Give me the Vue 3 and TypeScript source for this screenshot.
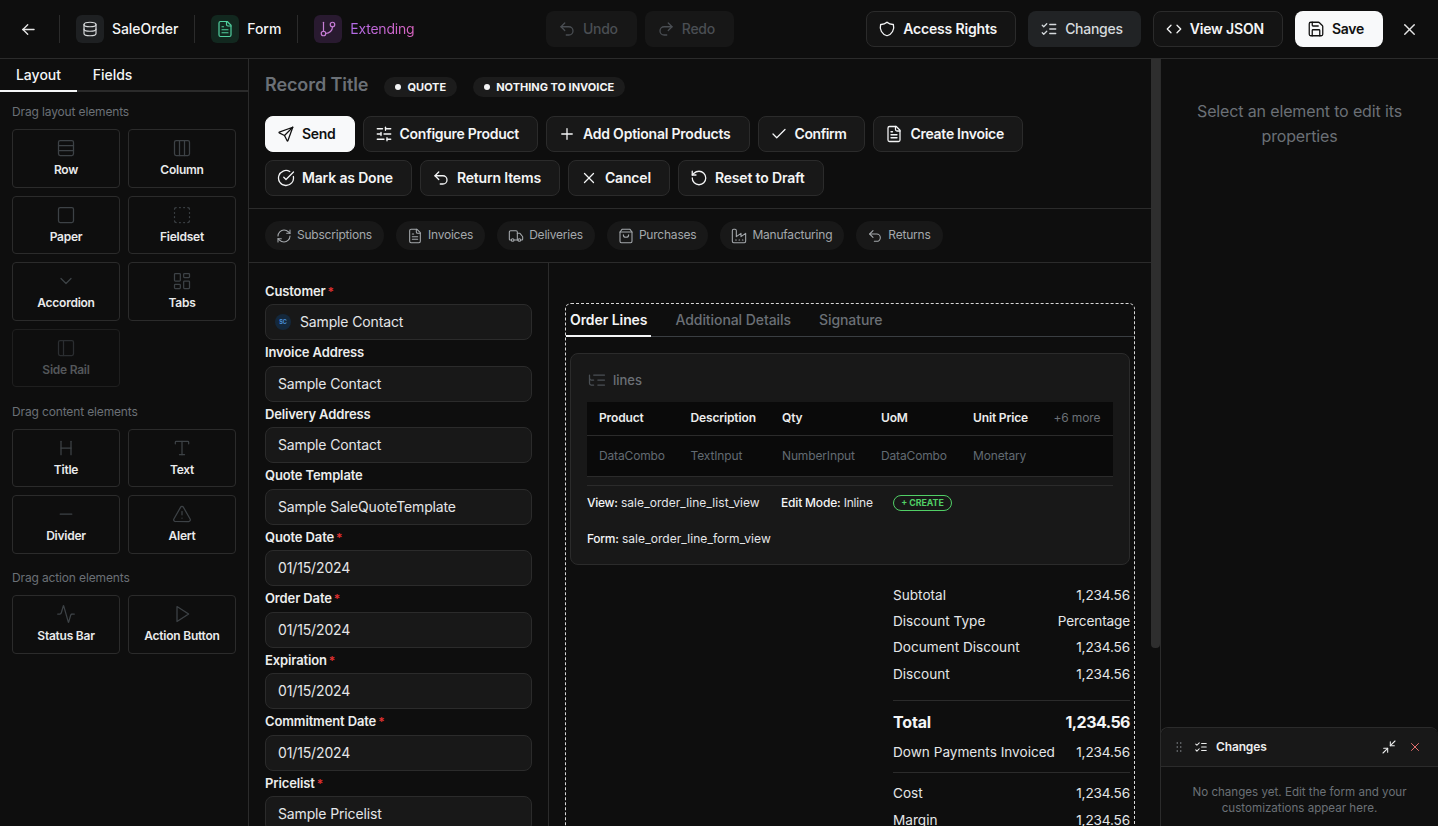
<script setup lang="ts">
import { h } from 'vue'

const icons: Record<string, string[]> = {
  back: ['M5 12h14', 'M5 12l6 6', 'M5 12l6-6'],
  db: ['M4 6a8 3 0 1 0 16 0a8 3 0 1 0-16 0', 'M4 6v6a8 3 0 0 0 16 0v-6', 'M4 12v6a8 3 0 0 0 16 0v-6'],
  file: ['M15 2H6a2 2 0 0 0-2 2v16a2 2 0 0 0 2 2h12a2 2 0 0 0 2-2V7Z', 'M14 2v4a2 2 0 0 0 2 2h4', 'M10 9H8', 'M16 13H8', 'M16 17H8'],
  branch: ['M6 3v12', 'M15 6a3 3 0 1 0 6 0a3 3 0 1 0-6 0', 'M3 18a3 3 0 1 0 6 0a3 3 0 1 0-6 0', 'M18 9a9 9 0 0 1-9 9'],
  undo: ['M9 14 4 9l5-5', 'M4 9h10.5a5.5 5.5 0 0 1 5.5 5.5a5.5 5.5 0 0 1-5.5 5.5H11'],
  redo: ['m15 14 5-5-5-5', 'M20 9H9.5A5.5 5.5 0 0 0 4 14.5A5.5 5.5 0 0 0 9.5 20H13'],
  shield: ['M12 3a12 12 0 0 0 8.5 3a12 12 0 0 1-8.5 15a12 12 0 0 1-8.5-15a12 12 0 0 0 8.5-3'],
  changes: ['m3 17 2 2 4-4', 'm3 7 2 2 4-4', 'M13 6h8', 'M13 12h8', 'M13 18h8'],
  code: ['M8 7l-5 5l5 5', 'M16 7l5 5l-5 5'],
  save: ['M15.2 3a2 2 0 0 1 1.4.6l3.8 3.8a2 2 0 0 1 .6 1.4V19a2 2 0 0 1-2 2H5a2 2 0 0 1-2-2V5a2 2 0 0 1 2-2z', 'M17 21v-7a1 1 0 0 0-1-1H8a1 1 0 0 0-1 1v7', 'M7 3v4a1 1 0 0 0 1 1h7'],
  x: ['M18 6 6 18', 'M6 6l12 12'],
  send: ['M10 14 21 3', 'M21 3l-6.5 18a.55.55 0 0 1-1 0l-3.5-7-7-3.5a.55.55 0 0 1 0-1l18-6.5'],
  sliders: ['M10 5H3', 'M12 19H3', 'M14 3v4', 'M16 17v4', 'M21 12h-9', 'M21 19h-5', 'M21 5h-7', 'M8 10v4', 'M8 12H3'],
  plus: ['M12 5v14', 'M5 12h14'],
  check: ['M20 6 9 17l-5-5'],
  done: ['M21.801 10A10 10 0 1 1 17 3.335', 'm9 11 3 3L22 4'],
  reset: ['M3 12a9 9 0 1 0 9-9 9.75 9.75 0 0 0-6.74 2.74L3 8', 'M3 3v5h5'],
  refresh: ['M3 12a9 9 0 0 1 9-9 9.75 9.75 0 0 1 6.74 2.74L21 8', 'M21 3v5h-5', 'M21 12a9 9 0 0 1-9 9 9.75 9.75 0 0 1-6.74-2.74L3 16', 'M8 16H3v5'],
  truck: ['M14 18V6a2 2 0 0 0-2-2H4a2 2 0 0 0-2 2v11a1 1 0 0 0 1 1h2', 'M15 18H9', 'M19 18h2a1 1 0 0 0 1-1v-3.65a1 1 0 0 0-.22-.624l-3.48-4.35A1 1 0 0 0 17.52 8H14', 'M15 18a2 2 0 1 0 4 0a2 2 0 1 0-4 0', 'M5 18a2 2 0 1 0 4 0a2 2 0 1 0-4 0'],
  bag: ['M6 2 3 6v14a2 2 0 0 0 2 2h14a2 2 0 0 0 2-2V6l-3-4Z', 'M3 6h18', 'M16 10a4 4 0 0 1-8 0'],
  factory: ['M2 20a2 2 0 0 0 2 2h16a2 2 0 0 0 2-2V8l-7 5V8l-7 5V4a2 2 0 0 0-2-2H4a2 2 0 0 0-2 2Z', 'M17 18h1', 'M12 18h1', 'M7 18h1'],
  row: ['M5 3h14a2 2 0 0 1 2 2v14a2 2 0 0 1-2 2H5a2 2 0 0 1-2-2V5a2 2 0 0 1 2-2z', 'M3 9h18', 'M3 15h18'],
  column: ['M5 3h14a2 2 0 0 1 2 2v14a2 2 0 0 1-2 2H5a2 2 0 0 1-2-2V5a2 2 0 0 1 2-2z', 'M9 3v18', 'M15 3v18'],
  paper: ['M5 3h14a2 2 0 0 1 2 2v14a2 2 0 0 1-2 2H5a2 2 0 0 1-2-2V5a2 2 0 0 1 2-2z'],
  fieldset: ['M5 3a2 2 0 0 0-2 2', 'M19 3a2 2 0 0 1 2 2', 'M21 19a2 2 0 0 1-2 2', 'M5 21a2 2 0 0 1-2-2', 'M9 3h1', 'M9 21h1', 'M14 3h1', 'M14 21h1', 'M3 9v1', 'M21 9v1', 'M3 14v1', 'M21 14v1'],
  chevron: ['m6 9 6 6 6-6'],
  tabs: ['M4 3h5a1 1 0 0 1 1 1v7a1 1 0 0 1-1 1H4a1 1 0 0 1-1-1V4a1 1 0 0 1 1-1z', 'M15 3h5a1 1 0 0 1 1 1v3a1 1 0 0 1-1 1h-5a1 1 0 0 1-1-1V4a1 1 0 0 1 1-1z', 'M15 12h5a1 1 0 0 1 1 1v7a1 1 0 0 1-1 1h-5a1 1 0 0 1-1-1v-7a1 1 0 0 1 1-1z', 'M4 16h5a1 1 0 0 1 1 1v3a1 1 0 0 1-1 1H4a1 1 0 0 1-1-1v-3a1 1 0 0 1 1-1z'],
  rail: ['M5 3h14a2 2 0 0 1 2 2v14a2 2 0 0 1-2 2H5a2 2 0 0 1-2-2V5a2 2 0 0 1 2-2z', 'M9 3v18'],
  heading: ['M6 12h12', 'M6 20V4', 'M18 20V4'],
  text: ['M12 4v16', 'M4 7V5a1 1 0 0 1 1-1h14a1 1 0 0 1 1 1v2', 'M9 20h6'],
  minus: ['M5 12h14'],
  alert: ['m21.73 18-8-14a2 2 0 0 0-3.48 0l-8 14A2 2 0 0 0 4 21h16a2 2 0 0 0 1.73-3', 'M12 9v4', 'M12 17h.01'],
  activity: ['M22 12h-2.48a2 2 0 0 0-1.93 1.46l-2.35 8.36a.25.25 0 0 1-.48 0L9.24 2.18a.25.25 0 0 0-.48 0l-2.35 8.36A2 2 0 0 1 4.49 12H2'],
  play: ['M6 3l14 9-14 9z'],
  tree: ['M21 12h-8', 'M21 6H8', 'M21 18h-8', 'M3 6v4c0 1.1.9 2 2 2h3', 'M3 10v6c0 1.1.9 2 2 2h3'],
  grip: ['M9 5h.01', 'M9 12h.01', 'M9 19h.01', 'M15 5h.01', 'M15 12h.01', 'M15 19h.01'],
  shrink: ['m14 10 7-7', 'M20 10h-6V4', 'm3 21 7-7', 'M4 14h6v6'],
}

const Icon = (props: { name: string; size?: number; sw?: number }) =>
  h(
    'svg',
    {
      width: props.size ?? 18,
      height: props.size ?? 18,
      viewBox: '0 0 24 24',
      fill: 'none',
      stroke: 'currentColor',
      'stroke-width': props.sw ?? 1.7,
      'stroke-linecap': 'round',
      'stroke-linejoin': 'round',
    },
    icons[props.name].map((d) => h('path', { d })),
  )
Icon.props = ['name', 'size', 'sw']

interface Tile {
  label: string
  icon: string
  off?: boolean
}

const paletteSections: { title: string; items: Tile[] }[] = [
  {
    title: 'Drag layout elements',
    items: [
      { label: 'Row', icon: 'row' },
      { label: 'Column', icon: 'column' },
      { label: 'Paper', icon: 'paper' },
      { label: 'Fieldset', icon: 'fieldset' },
      { label: 'Accordion', icon: 'chevron' },
      { label: 'Tabs', icon: 'tabs' },
      { label: 'Side Rail', icon: 'rail', off: true },
    ],
  },
  {
    title: 'Drag content elements',
    items: [
      { label: 'Title', icon: 'heading' },
      { label: 'Text', icon: 'text' },
      { label: 'Divider', icon: 'minus' },
      { label: 'Alert', icon: 'alert' },
    ],
  },
  {
    title: 'Drag action elements',
    items: [
      { label: 'Status Bar', icon: 'activity' },
      { label: 'Action Button', icon: 'play' },
    ],
  },
]

const actions = [
  { label: 'Send', icon: 'send', primary: true },
  { label: 'Configure Product', icon: 'sliders' },
  { label: 'Add Optional Products', icon: 'plus' },
  { label: 'Confirm', icon: 'check' },
  { label: 'Create Invoice', icon: 'file' },
  { label: 'Mark as Done', icon: 'done' },
  { label: 'Return Items', icon: 'undo' },
  { label: 'Cancel', icon: 'x' },
  { label: 'Reset to Draft', icon: 'reset' },
]

const links = [
  { label: 'Subscriptions', icon: 'refresh' },
  { label: 'Invoices', icon: 'file' },
  { label: 'Deliveries', icon: 'truck' },
  { label: 'Purchases', icon: 'bag' },
  { label: 'Manufacturing', icon: 'factory' },
  { label: 'Returns', icon: 'undo' },
]

const fields = [
  { label: 'Customer', value: 'Sample Contact', required: true, avatar: true },
  { label: 'Invoice Address', value: 'Sample Contact' },
  { label: 'Delivery Address', value: 'Sample Contact' },
  { label: 'Quote Template', value: 'Sample SaleQuoteTemplate' },
  { label: 'Quote Date', value: '01/15/2024', required: true },
  { label: 'Order Date', value: '01/15/2024', required: true },
  { label: 'Expiration', value: '01/15/2024', required: true },
  { label: 'Commitment Date', value: '01/15/2024', required: true },
  { label: 'Pricelist', value: 'Sample Pricelist', required: true },
]

const columns = [
  { name: 'Product', type: 'DataCombo' },
  { name: 'Description', type: 'TextInput' },
  { name: 'Qty', type: 'NumberInput' },
  { name: 'UoM', type: 'DataCombo' },
  { name: 'Unit Price', type: 'Monetary' },
]
</script>

<template>
  <div class="app">
    <header class="topbar">
      <div class="crumbs">
        <button class="back"><Icon name="back" :size="19" /></button>
        <span class="vsep"></span>
        <span class="tile"><Icon name="db" :sw="1.6" /></span>
        <span class="crumb">SaleOrder</span>
        <span class="vsep"></span>
        <span class="tile green"><Icon name="file" :sw="1.6" /></span>
        <span class="crumb">Form</span>
        <span class="vsep"></span>
        <span class="tile purple"><Icon name="branch" :sw="1.6" /></span>
        <span class="crumb ext">Extending</span>
      </div>
      <div class="history">
        <button class="tbtn off"><Icon name="undo" />Undo</button>
        <button class="tbtn off"><Icon name="redo" />Redo</button>
      </div>
      <div class="tools">
        <button class="tbtn line"><Icon name="shield" />Access Rights</button>
        <button class="tbtn active"><Icon name="changes" />Changes</button>
        <button class="tbtn line"><Icon name="code" />View JSON</button>
        <button class="tbtn white"><Icon name="save" />Save</button>
        <button class="close"><Icon name="x" :size="19" /></button>
      </div>
    </header>

    <div class="body">
      <aside class="palette">
        <div class="ptabs">
          <span class="ptab on">Layout</span>
          <span class="ptab">Fields</span>
        </div>
        <div class="psections">
          <section v-for="s in paletteSections" :key="s.title">
            <p class="ptitle">{{ s.title }}</p>
            <div class="pgrid">
              <div v-for="t in s.items" :key="t.label" class="ptile" :class="{ off: t.off }">
                <Icon :name="t.icon" :size="20" :sw="1.5" />
                <span>{{ t.label }}</span>
              </div>
            </div>
          </section>
        </div>
      </aside>

      <main class="canvas">
        <div class="head">
          <div class="titlerow">
            <h1>Record Title</h1>
            <span class="badge"><i></i>QUOTE</span>
            <span class="badge"><i></i>NOTHING TO INVOICE</span>
          </div>
          <div class="actions">
            <button v-for="a in actions" :key="a.label" class="act" :class="{ primary: a.primary }">
              <Icon :name="a.icon" />{{ a.label }}
            </button>
          </div>
        </div>
        <div class="links">
          <span v-for="l in links" :key="l.label" class="pill">
            <Icon :name="l.icon" :size="16" :sw="1.6" />{{ l.label }}
          </span>
        </div>
        <div class="split">
          <div class="formcol">
            <div v-for="f in fields" :key="f.label" class="field">
              <label>{{ f.label }}<em v-if="f.required">*</em></label>
              <div class="input" :class="{ withavatar: f.avatar }">
                <span v-if="f.avatar" class="avatar">SC</span>{{ f.value }}
              </div>
            </div>
          </div>
          <div class="maincol">
            <div class="dashed">
              <div class="tabs">
                <span class="tab on">Order Lines</span>
                <span class="tab">Additional Details</span>
                <span class="tab">Signature</span>
              </div>
              <div class="linecard">
                <div class="lineshead"><Icon name="tree" :size="20" :sw="1.5" />lines</div>
                <div class="table">
                  <div class="tr th">
                    <span v-for="c in columns" :key="c.name">{{ c.name }}</span>
                    <span class="more">+6 more</span>
                  </div>
                  <div class="tr td">
                    <span v-for="c in columns" :key="c.name">{{ c.type }}</span>
                    <span></span>
                  </div>
                </div>
                <div class="meta">
                  <span class="view"><b>View:</b> sale_order_line_list_view</span>
                  <span class="mode"><b>Edit Mode:</b> Inline</span>
                  <span class="chip">+ CREATE</span>
                </div>
                <div class="meta form"><span><b>Form:</b> sale_order_line_form_view</span></div>
              </div>
              <div class="totals">
                <div class="sum"><span>Subtotal</span><span>1,234.56</span></div>
                <div class="sum"><span>Discount Type</span><span>Percentage</span></div>
                <div class="sum"><span>Document Discount</span><span>1,234.56</span></div>
                <div class="sum"><span>Discount</span><span>1,234.56</span></div>
                <hr class="hr1" />
                <div class="sum total"><span>Total</span><span>1,234.56</span></div>
                <div class="sum down"><span>Down Payments Invoiced</span><span>1,234.56</span></div>
                <hr class="hr2" />
                <div class="sum"><span>Cost</span><span>1,234.56</span></div>
                <div class="sum last"><span>Margin</span><span>1,234.56</span></div>
              </div>
            </div>
          </div>
        </div>
      </main>

      <div class="scrolltrack"><div class="thumb"></div></div>

      <aside class="props">
        <p class="hint">Select an element to edit its properties</p>
        <div class="changes">
          <div class="chead">
            <Icon class="grip" name="grip" :size="14" :sw="2.6" />
            <Icon name="changes" :size="14" :sw="1.8" />
            <strong>Changes</strong>
            <Icon class="shrink" name="shrink" :size="16" :sw="1.6" />
            <Icon class="cross" name="x" :size="14" :sw="1.7" />
          </div>
          <p class="cbody">No changes yet. Edit the form and your customizations appear here.</p>
        </div>
      </aside>
    </div>
  </div>
</template>

<style>
html,
body {
  margin: 0;
  background: #0e0e0e;
}
</style>

<style scoped>
* {
  box-sizing: border-box;
}
.app {
  width: 1438px;
  height: 826px;
  overflow: hidden;
  display: flex;
  flex-direction: column;
  background: #0e0e0e;
  color: #f4f5f6;
  font-family: Inter, 'Liberation Sans', sans-serif;
  font-size: 14px;
  letter-spacing: -0.01em;
}
button {
  font-family: inherit;
  letter-spacing: inherit;
  cursor: pointer;
}

/* top bar */
.topbar {
  height: 59px;
  flex: none;
  display: flex;
  align-items: center;
  border-bottom: 1px solid #2b2b2b;
}
.crumbs {
  display: flex;
  align-items: center;
  width: 546px;
  flex: none;
}
.back {
  width: 59px;
  height: 28px;
  background: none;
  border: none;
  color: #e6e6e6;
  padding: 0 2px 0 0;
  display: flex;
  align-items: center;
  justify-content: center;
}
.vsep {
  width: 1px;
  height: 28px;
  background: #2b2b2b;
  margin-right: 16px;
}
.tile {
  width: 28px;
  height: 28px;
  border-radius: 6px;
  background: #1e2022;
  color: #d6d8da;
  display: flex;
  align-items: center;
  justify-content: center;
  margin-right: 8px;
}
.tile.green {
  background: #12281f;
  color: #51cf9f;
}
.tile.purple {
  background: #291a30;
  color: #c77dd6;
}
.crumb {
  font-weight: 500;
  letter-spacing: -0.005em;
  margin: 0 16px 2px 0;
}
.ext {
  font-weight: 400;
  letter-spacing: -0.015em;
  color: transparent;
  background: linear-gradient(90deg, #b26be8, #d964c0);
  -webkit-background-clip: text;
  background-clip: text;
}
.history {
  display: flex;
  gap: 8px;
}
.tools {
  margin-left: auto;
  display: flex;
  align-items: center;
  gap: 12px;
}
.tbtn,
.act {
  height: 36px;
  padding: 0 18px 1px 11px;
  border-radius: 8px;
  border: 1px solid transparent;
  display: flex;
  align-items: center;
  gap: 7px;
  font-size: 14px;
  font-weight: 600;
  letter-spacing: -0.02em;
  background: #181818;
  color: #f4f5f6;
}
.tbtn svg,
.act svg {
  margin-top: 1px;
}
.tbtn.off {
  color: #4a4e53;
  font-weight: 500;
  background: #171717;
  padding-right: 18px;
}
.tbtn.line {
  border-color: #2b2b2b;
  background: #141414;
  letter-spacing: -0.012em;
}
.tbtn.active {
  background: #212325;
  color: #d6dadd;
  font-weight: 500;
  padding-right: 17px;
}
.tbtn.white {
  background: #f8f9fa;
  color: #111;
}
.close {
  width: 28px;
  height: 28px;
  background: none;
  border: none;
  color: #e6e6e6;
  margin: 0 15px 0 0;
  padding: 0;
  display: flex;
  align-items: center;
  justify-content: center;
}

.body {
  flex: 1;
  min-height: 0;
  display: flex;
}

/* palette */
.palette {
  width: 249px;
  flex: none;
  border-right: 1px solid #2b2b2b;
}
.ptabs {
  display: flex;
  height: 33px;
  border-bottom: 2px solid #2b2b2b;
}
.ptab {
  width: 77px;
  height: 33px;
  text-align: center;
  line-height: 32px;
  font-weight: 500;
  font-size: 14px;
  letter-spacing: 0;
}
.ptab + .ptab {
  width: 71px;
}
.ptab.on {
  border-bottom: 2px solid #f4f5f6;
}
.ptitle {
  margin: 0;
  height: 20px;
  line-height: 20px;
  font-size: 12px;
  color: #6b7076;
}
.psections {
  padding: 10px 12px 0;
}
.psections section + section {
  margin-top: 14.2px;
}
.pgrid {
  margin-top: 7px;
  display: grid;
  grid-template-columns: 108px 108px;
  gap: 8px;
}
.ptile {
  height: 58.6px;
  border: 1px solid #2b2b2b;
  border-radius: 4px;
  display: flex;
  flex-direction: column;
  align-items: center;
  padding-top: 8px;
  gap: 3px;
  color: #3d4246;
}
.ptile span {
  font-size: 12px;
  font-weight: 600;
  letter-spacing: -0.02em;
  line-height: 18px;
  color: #e9eaeb;
}
.ptile.off {
  border-color: #1f1f1f;
  color: #2b2e31;
}
.ptile.off span {
  color: #54575a;
}

/* canvas */
.canvas {
  width: 902px;
  flex: none;
  display: flex;
  flex-direction: column;
  min-height: 0;
}
.head {
  padding: 16px 16px 12px;
  border-bottom: 1px solid #2b2b2b;
}
.titlerow {
  height: 22px;
  display: flex;
  align-items: center;
  gap: 16px;
  margin-bottom: 19px;
}
h1 {
  margin: 0 0 3px;
  font-size: 18px;
  font-weight: 600;
  letter-spacing: -0.005em;
  color: #6b7076;
}
.badge {
  height: 20px;
  margin-top: 2px;
  border-radius: 10px;
  background: #1c1c1c;
  padding: 0 11px;
  display: flex;
  align-items: center;
  gap: 6px;
  font-size: 11px;
  font-weight: 700;
  letter-spacing: 0;
  color: #f4f5f6;
}
.badge i {
  width: 6px;
  height: 6px;
  border-radius: 50%;
  background: #f4f5f6;
}
.actions {
  display: flex;
  flex-wrap: wrap;
  gap: 8px;
}
.act {
  border-color: #2b2b2b;
}
.act:nth-child(3) {
  letter-spacing: -0.016em;
}
.act:nth-child(4) {
  letter-spacing: -0.03em;
}
.act:nth-child(n + 6) {
  letter-spacing: -0.012em;
}
.act.primary {
  background: #f8f9fa;
  border-color: #f8f9fa;
  color: #111;
}
.links {
  padding: 12px 16px;
  display: flex;
  gap: 12px;
  border-bottom: 1px solid #2b2b2b;
}
.pill {
  height: 29px;
  padding: 0 12px 2px 11px;
  border-radius: 15px;
  background: #181818;
  display: flex;
  align-items: center;
  gap: 5px;
  font-size: 12px;
  letter-spacing: -0.018em;
  color: #a4a8ac;
}
.pill svg {
  margin-top: 2px;
}
.split {
  flex: 1;
  min-height: 0;
  display: flex;
  overflow: hidden;
}
.formcol {
  width: 300px;
  flex: none;
  padding: 15.5px 16px 0;
  border-right: 1px solid #2b2b2b;
}
.field label {
  display: block;
  height: 25.5px;
  padding-top: 3px;
  line-height: 19px;
  font-size: 13px;
  font-weight: 600;
  letter-spacing: -0.01em;
  color: #eceded;
}
.field em {
  color: #e03131;
  font-style: normal;
  font-size: 12px;
  margin-left: 2px;
}
.input {
  height: 36px;
  border: 1px solid #2b2b2b;
  border-radius: 8px;
  background: #181818;
  padding: 0 12px 1px;
  display: flex;
  align-items: center;
  font-size: 14px;
  color: #e4e6e8;
}
.input.withavatar {
  padding-left: 9px;
}
.avatar {
  width: 16px;
  height: 16px;
  border-radius: 50%;
  background: #14283c;
  color: #4a90d9;
  font-size: 5.5px;
  font-weight: 700;
  display: flex;
  align-items: center;
  justify-content: center;
  margin-right: 9px;
}
.maincol {
  flex: 1;
  min-width: 0;
  padding: 40px 16px 0;
}
.dashed {
  border: 1px dashed #d8d8d8;
  border-radius: 6px;
  height: 700px;
}
.tabs {
  height: 33px;
  border-bottom: 1px solid #3a3e42;
  display: flex;
  gap: 20px;
}
.tab {
  height: 33px;
  padding: 0 4px;
  line-height: 32px;
  font-weight: 500;
  font-size: 14px;
  letter-spacing: -0.005em;
  color: #6b7076;
}
.tab.on {
  font-weight: 600;
  color: #f4f5f6;
  border-bottom: 2px solid #f4f5f6;
}
.linecard {
  margin: 16px 4px 0;
  height: 212px;
  border: 1px solid #2b2b2b;
  border-radius: 8px;
  background: #181818;
  padding: 16px;
}
.lineshead {
  height: 21px;
  margin-bottom: 11px;
  padding-bottom: 2px;
  display: flex;
  align-items: center;
  gap: 6px;
  color: #6b7076;
  font-size: 13px;
  font-weight: 500;
  letter-spacing: 0;
}
.lineshead svg {
  color: #4a4f54;
}
.table {
  background: #0a0a0a;
}
.tr {
  display: grid;
  grid-template-columns: 91.5px 91.5px 99px 92px 80.5px 1fr;
  padding-left: 12px;
  font-size: 12px;
}
.th {
  height: 34px;
  padding-bottom: 2px;
  align-items: center;
  font-weight: 600;
  color: #eceded;
  border-bottom: 1px solid #2b2b2b;
}
.td {
  height: 41px;
  padding-bottom: 2px;
  align-items: center;
  color: #626a72;
  border-bottom: 1px solid #2b2b2b;
}
.more {
  font-weight: 400;
  color: #6b7076;
}
.meta {
  margin-top: 8px;
  border-top: 1px solid #2b2b2b;
  height: 34px;
  display: flex;
  align-items: center;
  font-size: 12px;
  letter-spacing: 0.005em;
  color: #e4e6e8;
}
.meta b {
  font-weight: 500;
  letter-spacing: -0.025em;
  color: #f4f5f6;
}
.meta.form {
  border-top: none;
  margin-top: 2px;
  height: 34px;
}
.view {
  width: 194px;
}
.mode {
  width: 112px;
  letter-spacing: -0.015em;
}
.mode b {
  letter-spacing: -0.015em;
}
.chip {
  height: 16px;
  width: 59px;
  border-radius: 8px;
  border: 1px solid #51cf66;
  color: #51cf66;
  font-size: 8.8px;
  font-weight: 700;
  letter-spacing: 0;
  display: flex;
  align-items: center;
  justify-content: center;
}
.totals {
  margin: 16.5px 4px 0 auto;
  width: 237px;
}
.sum {
  height: 26.33px;
  display: flex;
  align-items: center;
  justify-content: space-between;
  font-size: 13.6px;
  letter-spacing: 0;
  color: #e4e6e8;
}
.sum span:last-child {
  letter-spacing: -0.01em;
}
.sum.total {
  height: 30px;
  font-size: 16px;
  font-weight: 700;
  letter-spacing: -0.01em;
  color: #f4f5f6;
}
.sum.total span:last-child {
  letter-spacing: -0.033em;
}
.sum.down {
  margin-top: 2px;
}
.sum.last {
  margin-top: 0.7px;
}
hr {
  border: none;
  border-top: 1px solid #2b2b2b;
  margin: 0;
}
.hr1 {
  margin: 13px 0 6px;
}
.hr2 {
  margin: 6.7px 0 7px;
}

.scrolltrack {
  width: 9px;
  flex: none;
}
.thumb {
  height: 589px;
  background: #2e2e2e;
  border-radius: 0 0 4px 4px;
}

/* properties */
.props {
  flex: 1;
  min-width: 0;
  position: relative;
  border-left: 1px solid #2b2b2b;
}
.hint {
  margin: 40px 24px 0;
  text-align: center;
  font-size: 16px;
  line-height: 25px;
  color: #6b7076;
}
.changes {
  position: absolute;
  left: -1px;
  right: 0;
  bottom: 0;
  height: 99px;
  background: #101010;
  border-top: 1px solid #2b2b2b;
  border-left: 1px solid #2b2b2b;
  border-radius: 8px 8px 0 0;
}
.chead {
  height: 39px;
  display: flex;
  align-items: center;
  padding: 0 16px 1px 11px;
  gap: 6px;
  background: #181818;
  border-bottom: 1px solid #2b2b2b;
  border-radius: 8px 8px 0 0;
  color: #eceded;
}
.chead strong {
  font-size: 12px;
  font-weight: 600;
  margin-left: 2px;
}
.grip {
  color: #8a8f94;
  margin-right: 2px;
}
.shrink {
  margin-left: auto;
  margin-right: 5px;
}
.cross {
  color: #e8716f;
}
.cbody {
  margin: 17px 16px 0;
  text-align: center;
  font-size: 11.6px;
  line-height: 16px;
  letter-spacing: 0;
  color: #6b7076;
}
</style>
